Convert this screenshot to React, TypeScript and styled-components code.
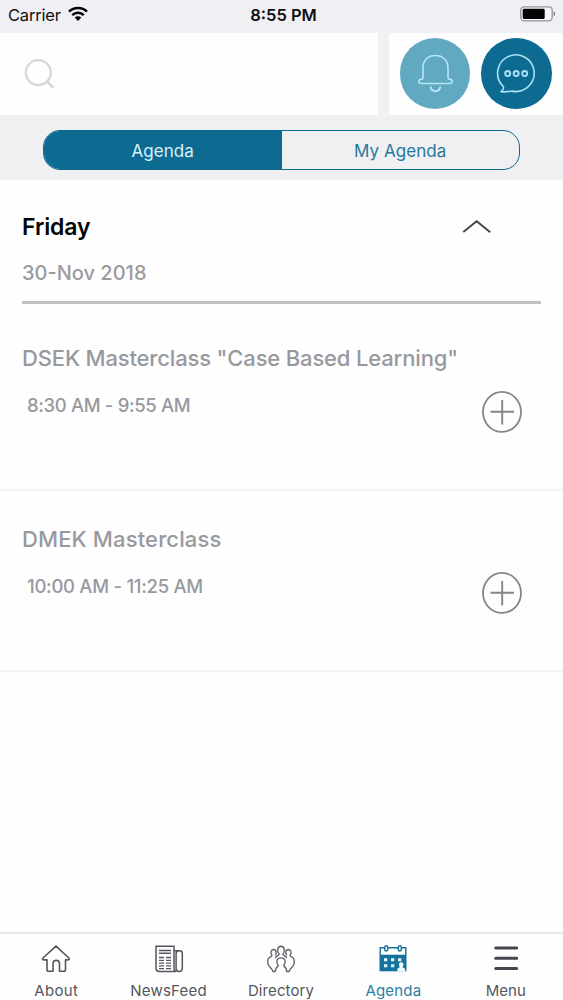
import React from 'react';
import styled, { createGlobalStyle } from 'styled-components';

const teal = '#0d6b92';

const GlobalStyle = createGlobalStyle`
  * { box-sizing: border-box; }
  body { margin: 0; background: #fefefe; font-family: Inter, "Liberation Sans", sans-serif; }
  button { font: inherit; border: 0; padding: 0; margin: 0; background: none; }
  svg { display: block; flex: none; overflow: visible; }
`;

const Screen = styled.div`
  width: 563px;
  height: 1000px;
  display: flex;
  flex-direction: column;
  overflow: hidden;
  background: #fefefe;
`;

const StatusBar = styled.header`
  height: 32.5px;
  display: grid;
  grid-template-columns: 1fr auto 1fr;
  align-items: center;
  padding: 0 8px 3.5px;
  background: #efeff4;
  color: #111;
`;

const Carrier = styled.div`
  display: flex;
  align-items: center;
  gap: 7px;
  font-size: 16.5px;
  line-height: 20px;
  letter-spacing: -0.2px;
`;

const Clock = styled.div`
  padding-left: 4px;
  font-size: 16.5px;
  line-height: 20px;
  font-weight: 600;
`;

const Battery = styled.div`
  justify-self: end;
  margin: -1px -1px 0 0;
`;

const TopRow = styled.div`
  height: 82px;
  display: flex;
  gap: 11px;
  background: #f1f1f4;
`;

const Search = styled.div`
  width: 378px;
  padding: 26px 24px;
  background: #fefefe;
`;

const Actions = styled.div`
  flex: 1;
  display: flex;
  gap: 11px;
  padding: 5.5px 0 0 10.5px;
  background: #fefefe;
`;

const RoundButton = styled.button<{ $color: string }>`
  width: 70.5px;
  height: 70.5px;
  flex: none;
  border-radius: 50%;
  background: ${({ $color }) => $color};
`;

const SegmentBar = styled.div`
  height: 65.5px;
  padding: 15.5px 43px 10px;
  background: #f0f0f3;
`;

const Segments = styled.div`
  height: 40px;
  width: 477px;
  display: flex;
  overflow: hidden;
  border: 1.5px solid ${teal};
  border-radius: 17px;
`;

const Segment = styled.button<{ $active?: boolean }>`
  flex: 1;
  padding-top: 1px;
  font-size: 17px;
  letter-spacing: 0.05px;
  color: ${({ $active }) => ($active ? '#d9f1fa' : '#27799a')};
  background: ${({ $active }) => ($active ? teal : 'transparent')};
`;

const DayHeader = styled.section`
  height: 124px;
  margin: 0 22px;
  padding-top: 32px;
  border-bottom: 3px solid #c0c0c1;
`;

const DayTitle = styled.div`
  height: 30px;
  display: flex;
  align-items: center;
  justify-content: space-between;
  padding-right: 50.5px;
`;

const Day = styled.h1`
  margin: 0;
  font-size: 23px;
  font-weight: 600;
  line-height: 30px;
  letter-spacing: -0.1px;
  color: #050505;
`;

const DateText = styled.div`
  margin-top: 18px;
  font-size: 20px;
  font-weight: 500;
  line-height: 26px;
  color: #9b9b9f;
`;

const Sessions = styled.main`
  flex: 1;
  padding-top: 6px;
`;

const Session = styled.article`
  height: 181px;
  display: grid;
  grid-template-columns: 1fr 40px;
  grid-template-rows: 30px auto;
  padding: 33px 41px 0 22px;
  border-bottom: 2px solid #f4f4f4;
  color: #97999e;
  font-weight: 500;
`;

const SessionTitle = styled.h2<{ $spacing: number }>`
  grid-column: 1 / 3;
  margin: 0;
  font-size: 22px;
  font-weight: 500;
  line-height: 30px;
  white-space: nowrap;
  letter-spacing: ${({ $spacing }) => $spacing}px;
`;

const SessionTime = styled.div<{ $spacing: number }>`
  padding: 20px 0 0 5px;
  font-size: 18.5px;
  line-height: 24px;
  letter-spacing: ${({ $spacing }) => $spacing}px;
`;

const AddButton = styled.button`
  width: 40px;
  height: 42px;
  margin-top: 18px;
`;

const TabBar = styled.nav`
  height: 68px;
  display: grid;
  grid-template-columns: repeat(5, 112.4px);
  border-top: 2px solid #e8e8e9;
  background: #fefefe;
`;

const Tab = styled.button<{ $active?: boolean; $spacing: number }>`
  display: flex;
  flex-direction: column;
  align-items: center;
  padding-top: 11px;
  gap: 7.5px;
  font-size: 15px;
  line-height: 20px;
  letter-spacing: ${({ $spacing }) => $spacing}px;
  color: ${({ $active }) => ($active ? '#297f9e' : '#55565c')};
`;

const WifiIcon = () => (
  <svg width="20" height="15" viewBox="0 0 20 15" fill="none" stroke="#050505" strokeWidth="2.5">
    <path d="M1 4.700C6-.2 14-.2 19 4.700M4.200 8.100c3.300-3.200 8.300-3.200 11.600 0" />
    <path d="M6.700 10.500c1.900-1.800 4.700-1.800 6.600 0L10 13.900Z" fill="#050505" stroke="none" />
  </svg>
);

const BatteryIcon = () => (
  <svg width="36" height="16" viewBox="0 0 36 16">
    <rect x=".8" y=".8" width="31.4" height="14" rx="3.5" fill="#f8f8fa" stroke="#929297" strokeWidth="1.3" />
    <rect x="2.7" y="2.7" width="22" height="10.2" rx="1.3" fill="#050508" />
    <path d="M33.7 5.3c2 1 2 4 0 5Z" fill="#77777b" />
  </svg>
);

const SearchIcon = () => (
  <svg width="31" height="31" viewBox="0 0 31 31" fill="none" stroke="#d7d7d7" strokeWidth="2.4">
    <circle cx="14.3" cy="13.6" r="12.5" />
    <path d="m22.8 22.1 6.5 6.5" strokeWidth="2.7" />
  </svg>
);

const BellIcon = () => (
  <svg width="70" height="70" viewBox="0 0 70 70" fill="none" stroke="#b5e6f7" strokeWidth="1.6">
    <path d="M23 40V30c0-8 5-12.5 12.3-12.5S48 22 48 30v10c0 1 .8 1.2 2 1.3 3.2.4 3 4.2-.5 4.2h-28c-3.5 0-3.7-3.8-.5-4.2 1.2-.1 2-.3 2-1.3Z" />
    <path d="M30.700 48.500c.6 6.300 9 6.300 9.600 0" strokeWidth="2" />
  </svg>
);

const ChatIcon = () => (
  <svg width="70" height="70" viewBox="0 0 70 70" fill="none" stroke="#a8e0f6" strokeWidth="1.6" strokeLinejoin="round">
    <path d="M22.3 48.5A18.3 18.3 0 1 1 31 53.1c-3.5.5-7 1.2-11 .5 2-1.5 3-3 2.3-5.1Z" />
    <circle cx="26.7" cy="35.5" r="2.5" strokeWidth="1.9" />
    <circle cx="35.2" cy="35.5" r="2.5" strokeWidth="1.9" />
    <circle cx="43.7" cy="35.5" r="2.5" strokeWidth="1.9" />
  </svg>
);

const ChevronIcon = () => (
  <svg width="28" height="13" viewBox="0 0 28 13" fill="none" stroke="#414141" strokeWidth="1.8">
    <path d="M.3 11 13.7.2 27.2 11.3" />
  </svg>
);

const PlusIcon = () => (
  <svg width="40" height="42" viewBox="0 0 40 42" fill="none" stroke="#878585" strokeWidth="1.8">
    <ellipse cx="20" cy="20.9" rx="19" ry="20" />
    <path d="M8.5 20.700h23.500M20.200 9v24.500" strokeWidth="1.9" />
  </svg>
);

const HomeIcon = () => (
  <svg width="28" height="28" viewBox="0 0 28 28" fill="none" stroke="#55565d" strokeWidth="1.6" strokeLinejoin="round">
    <path d="M14 1.2 26.9 13c1 .8.4 1.9-.7 1.9H23.500v9.500c0 1.200-.6 1.900-1.700 1.900H17.500v-7.500c0-4.600-6.500-4.600-6.500 0v7.500H6.700c-1.100 0-1.700-.7-1.700-1.900v-9.500H1.700C.6 14.900 0 13.800 1 13Z" />
  </svg>
);

const NewsIcon = () => (
  <svg width="28" height="28" viewBox="0 0 28 28" fill="none" stroke="#55565d" strokeWidth="1.5">
    <path d="M1 1.2h18v22.3c0 1.8.8 2.9 2.3 2.9H4.3C2.3 26.400 1 25.300 1 23.500Zm18 4.600h5.500c1.600 0 2.800 1 2.800 2.500v15.200c0 3.900-6.200 3.900-6.200 0V8.300c0-1.300 1-2.300 2.500-2.300" />
    <path d="M4 5.500h12M4 8.300h12" />
    <path d="M4 12.5h5m2 0h5m-12 2.800h5m2 0h5m-12 2.800h5m2 0h5m-12 2.800h5m2 0h5m-12 2.700h5m2 0h5" strokeWidth="1.3" />
  </svg>
);

const PeopleIcon = () => (
  <svg width="28" height="28" viewBox="0 0 28 28" fill="none" stroke="#606168" strokeWidth="1.35" strokeLinejoin="round">
    <path d="M8.5 13.2c.2-3 3.7-2.3 3.7-4C9.7 7 10.2 1.2 14 1.2s4.300 5.800 1.800 8c0 1.700 3.500 1 3.700 4" />
    <path d="M5 10.3C3.2 8.3 3.7 4.5 6.6 4.500c3 0 3.400 3.800 1.600 5.800M5 10.300C5 12.300.8 11.600.8 15.300v3c0 3.200 4.200 4.200 5.200 8.200h2.300c.2-2.800.6-4.300 3-5.700-2.700-4-1.600-8 2.700-8s5.400 4 2.700 8c2.400 1.400 2.800 2.900 3 5.700H22c1-4 5.200-5 5.200-8.200v-3c0-3.700-4.200-3-4.200-5 1.800-2 1.300-5.800-1.600-5.800-3 0-3.400 3.800-1.600 5.800" />
  </svg>
);

const CalendarIcon = () => (
  <svg width="28" height="28" viewBox="0 0 28 28" fill="none" stroke="#14739a" strokeWidth="1.4">
    <path d="M1.2 10.5V2.7h25.6v7.8" />
    <path d="M.5 9.7h27V26.3H.5Z" fill="#14739a" stroke="none" />
    <rect x="5.7" y=".7" width="3" height="5.3" rx="1.5" fill="#fefefe" />
    <rect x="19.3" y=".7" width="3" height="5.3" rx="1.5" fill="#fefefe" />
    <path d="M5 13.3h3.3v3H5Zm7 0h3.3v3H12Zm7 0h3.3v3H19ZM5 19.300h3.300v3H5Zm7 0h3.300v3H12Z" fill="#e4f6fa" stroke="none" />
    <path d="M18.300 26.400v-2.200c0-1.500 2.400-1 2.400-2.700-1.700-2.500-.3-4.300 1.500-4.300s3.200 1.800 1.500 4.300c0 1.700 2.400 1.200 2.400 2.700v2.200Z" fill="#f2fbfd" stroke="none" />
  </svg>
);

const MenuIcon = () => (
  <svg width="28" height="28" viewBox="0 0 28 28" stroke="#45464d" strokeWidth="3" strokeLinecap="round">
    <path d="M3.700 3h21M3.700 13.200h21M3.700 23.500h21" />
  </svg>
);

const sessions = [
  { title: 'DSEK Masterclass "Case Based Learning"', time: '8:30 AM - 9:55 AM', titleSpacing: -0.16, timeSpacing: -0.35 },
  { title: 'DMEK Masterclass', time: '10:00 AM - 11:25 AM', titleSpacing: 0.13, timeSpacing: -0.28 },
];

const tabs = [
  { label: 'About', Icon: HomeIcon, spacing: 0.3 },
  { label: 'NewsFeed', Icon: NewsIcon, spacing: 0.2 },
  { label: 'Directory', Icon: PeopleIcon, spacing: 0.1 },
  { label: 'Agenda', Icon: CalendarIcon, spacing: 0.2, active: true },
  { label: 'Menu', Icon: MenuIcon, spacing: 0 },
];

export default function App() {
  return (
    <Screen>
      <GlobalStyle />
      <StatusBar>
        <Carrier>Carrier <WifiIcon /></Carrier>
        <Clock>8:55 PM</Clock>
        <Battery><BatteryIcon /></Battery>
      </StatusBar>
      <TopRow>
        <Search><SearchIcon /></Search>
        <Actions>
          <RoundButton $color="#61a8c1" aria-label="Notifications"><BellIcon /></RoundButton>
          <RoundButton $color={teal} aria-label="Messages"><ChatIcon /></RoundButton>
        </Actions>
      </TopRow>
      <SegmentBar>
        <Segments>
          <Segment $active>Agenda</Segment>
          <Segment>My Agenda</Segment>
        </Segments>
      </SegmentBar>
      <DayHeader>
        <DayTitle><Day>Friday</Day><ChevronIcon /></DayTitle>
        <DateText>30-Nov 2018</DateText>
      </DayHeader>
      <Sessions>
        {sessions.map(({ title, time, titleSpacing, timeSpacing }) => (
          <Session key={title}>
            <SessionTitle $spacing={titleSpacing}>{title}</SessionTitle>
            <SessionTime $spacing={timeSpacing}>{time}</SessionTime>
            <AddButton aria-label="Add to my agenda"><PlusIcon /></AddButton>
          </Session>
        ))}
      </Sessions>
      <TabBar>
        {tabs.map(({ label, Icon, spacing, active }) => (
          <Tab key={label} $active={active} $spacing={spacing}><Icon />{label}</Tab>
        ))}
      </TabBar>
    </Screen>
  );
}
